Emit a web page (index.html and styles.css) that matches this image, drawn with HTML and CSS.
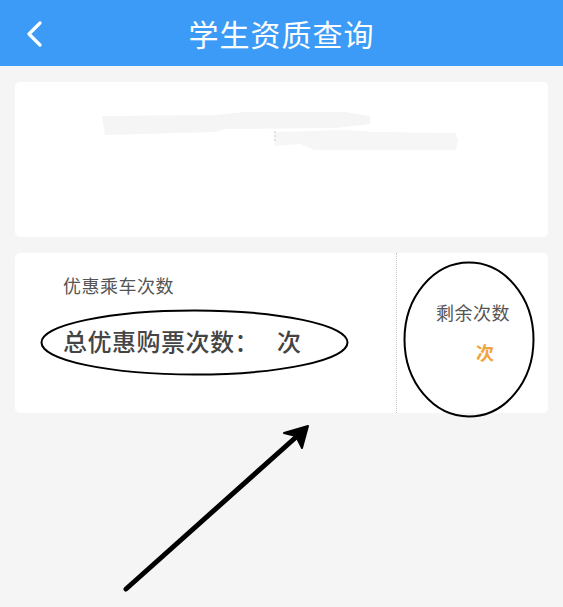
FILE: index.html
```html
<!DOCTYPE html>
<html lang="zh-CN">
<head>
    <meta charset="UTF-8">
    <meta name="viewport" content="width=device-width, initial-scale=1.0">
    <title>学生资质查询</title>
    <link rel="stylesheet" href="styles.css">
</head>
<body>
    <header class="topbar">
        <span class="back">
            <svg width="18" height="26" viewBox="0 0 18 26"><path d="M15 2 L4 13 L15 24" fill="none" stroke="#fff" stroke-width="3.2" stroke-linecap="round" stroke-linejoin="round"/></svg>
        </span>
        <h1 class="title">学生资质查询</h1>
    </header>

    <main class="content">
        <section class="card info-card">
            <!-- masked student info -->
            <svg class="masked" width="533" height="155" viewBox="0 0 533 155">
                <path d="M87 34 L200 33 L230 30 L330 30 L355 34 L355 42 L320 46 L210 47 L200 50 L90 53 L88 40 Z" fill="#f5f5f5"/>
                <path d="M258 50 L330 48 L360 50 L440 51 L443 58 L441 68 L300 68 L285 62 L260 64 Z" fill="#f6f6f6"/>
                <line x1="260" y1="49" x2="260" y2="60" stroke="#d0d0d0" stroke-width="1" stroke-dasharray="2 2"/>
            </svg>
        </section>

        <section class="card count-card">
            <div class="count-main">
                <p class="label">优惠乘车次数</p>
                <p class="total">总优惠购票次数：<span class="gap"></span>次</p>
            </div>
            <div class="count-left">
                <p class="label">剩余次数</p>
                <p class="remain">次</p>
            </div>
        </section>
    </main>

    <!-- hand-drawn marks over the page -->
    <svg class="marks" width="563" height="607" viewBox="0 0 563 607">
        <ellipse cx="194.5" cy="342.5" rx="153" ry="32" fill="none" stroke="#000" stroke-width="2"/>
        <ellipse cx="469" cy="339.5" rx="64.5" ry="77" fill="none" stroke="#000" stroke-width="2"/>
        <line x1="126" y1="589" x2="304" y2="430" stroke="#000" stroke-width="5" stroke-linecap="round"/>
        <path d="M308 426 L284 433 L296 436 L302 448 Z" fill="#000" stroke="#000" stroke-width="2" stroke-linejoin="round"/>
    </svg>
</body>
</html>
```

FILE: styles.css
```css
* {
    box-sizing: border-box;
}

body {
    margin: 0;
    width: 563px;
    height: 607px;
    overflow: hidden;
    background-color: #f5f5f6;
    font-family: "Noto Sans CJK SC", "Noto Sans", sans-serif;
    position: relative;
}

p {
    margin: 0;
}

.topbar {
    height: 66px;
    background-color: #3d9bf8;
    display: flex;
    align-items: center;
    justify-content: center;
    position: relative;
}

.back {
    position: absolute;
    left: 25px;
    top: 21px;
    display: flex;
}

.title {
    margin: 0;
    color: #fff;
    font-size: 30px;
    font-weight: normal;
    letter-spacing: 1px;
}

.content {
    padding: 16px 15px;
    display: flex;
    flex-direction: column;
    gap: 16px;
}

.card {
    background-color: #fff;
    border-radius: 5px;
}

.info-card {
    height: 155px;
}

.masked {
    display: block;
}

.count-card {
    height: 160px;
    display: flex;
}

.count-main {
    width: 382px;
    padding: 19px 0 0 48px;
    border-right: 1px dotted #c8c8c8;
}

.count-main .label {
    font-size: 18px;
    letter-spacing: 0.5px;
    color: #555;
    line-height: 26px;
}

.total {
    margin-top: 28px;
    font-size: 24px;
    font-weight: 500;
    letter-spacing: 0.5px;
    color: #444;
    line-height: 30px;
}

.gap {
    display: inline-block;
    width: 18px;
}

.count-left {
    flex: 1;
    padding: 46px 0 0 39px;
}

.count-left .label {
    font-size: 18px;
    letter-spacing: 0.5px;
    color: #555;
    line-height: 26px;
}

.remain {
    margin-top: 15px;
    margin-left: 40px;
    font-size: 18px;
    font-weight: bold;
    color: #f0a53a;
    line-height: 24px;
}

.marks {
    position: absolute;
    left: 0;
    top: 0;
    pointer-events: none;
}
```
